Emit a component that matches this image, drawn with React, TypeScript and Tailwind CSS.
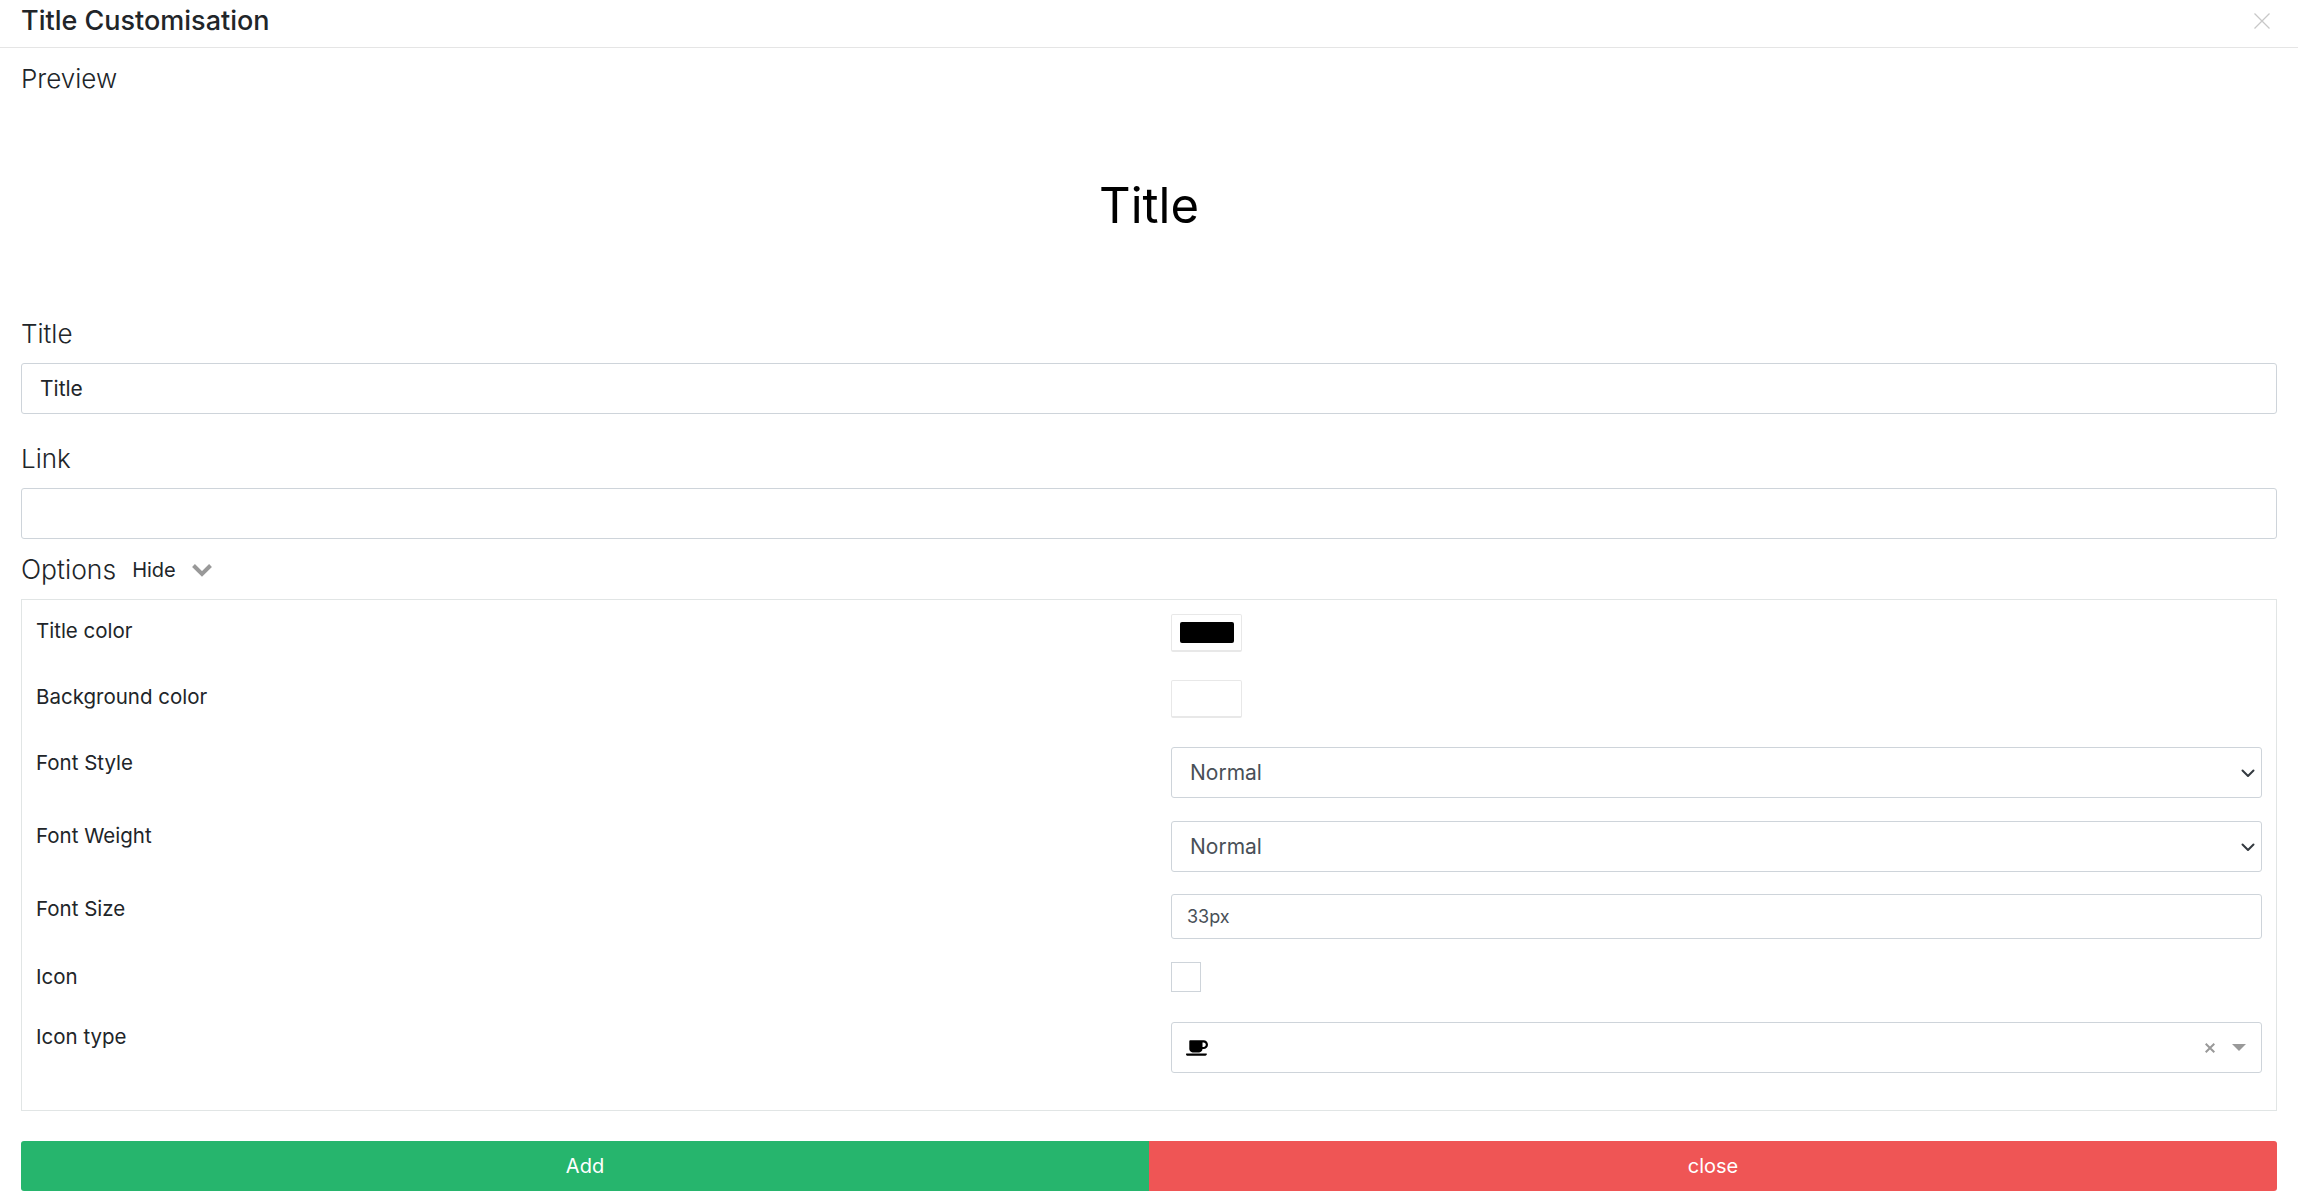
import React from "react";
import { FaCoffee } from "react-icons/fa";

const font = { fontFamily: "Inter, 'Liberation Sans', sans-serif" };

function Row({ label, labelClass = "", className = "", children }: { label: string; labelClass?: string; className?: string; children: React.ReactNode }) {
  return (
    <div className={`flex items-start ${className}`}>
      <div className={`w-[1149px] pl-[14px] shrink-0 text-[20.5px] leading-[30px] text-[#212529] ${labelClass}`}>{label}</div>
      <div className="flex-1 min-w-0">{children}</div>
    </div>
  );
}

function Chevron() {
  return (
    <svg viewBox="0 0 16 16" className="absolute right-[6px] top-1/2 -translate-y-1/2 w-[16px] h-[16px] pointer-events-none" fill="none" stroke="#343a40" strokeWidth="2" strokeLinecap="round" strokeLinejoin="round">
      <path d="M2.5 5.5 8 11l5.5-5.5" />
    </svg>
  );
}

function Sel({ className = "" }: { className?: string }) {
  return (
    <div className={`relative h-[51px] ${className}`}>
      <select className="block w-full h-full appearance-none bg-white border border-[#ced4da] rounded-[3px] pl-[18px] pr-8 text-[21px] text-[#495057] outline-none" defaultValue="Normal">
        <option>Normal</option>
      </select>
      <Chevron />
    </div>
  );
}

export default function App() {
  return (
    <div className="w-[2298px] h-[1196px] bg-white overflow-hidden text-[#212529]" style={font}>
      <header className="h-[48px] border-b border-[#e5e5e5] pb-[6px] pl-[21px] pr-[20px] flex items-center justify-between">
        <h1 className="text-[27px] leading-[40px] font-medium text-[#212529]">Title Customisation</h1>
        <svg viewBox="0 0 16 16" className="w-[16px] h-[16px] mr-[8px]" fill="none" stroke="#c8c8c8" strokeWidth="1.3">
          <path d="M.5.5l15 15M15.5.5l-15 15" />
        </svg>
      </header>

      <main className="px-[21px]">
        <div className="pt-[11px] text-[26px] leading-[39px] font-light text-[#212529]">Preview</div>
        <div className="h-[215px] pb-[0px] flex items-center justify-center">
          <span className="text-[49px] leading-[64px] text-black font-normal">Title</span>
        </div>

        <label className="block mt-[1px] text-[26px] leading-[39px] font-light">Title</label>
        <input readOnly value="Title" className="block w-full h-[51px] mt-[10px] border border-[#ced4da] rounded-[3px] px-[18px] text-[21px] text-[#212529] outline-none" />

        <label className="block mt-[25px] h-[39px] text-[26px] leading-[39px] font-light">Link</label>
        <input readOnly className="block w-full h-[51px] mt-[10px] border border-[#ced4da] rounded-[3px] px-[18px] text-[21px] text-[#495057] outline-none" />

        <div className="mt-[11px] h-[39px] flex items-center">
          <span className="text-[26.5px] leading-[39px] font-light">Options</span>
          <span className="ml-[16px] text-[20px]">Hide</span>
          <svg viewBox="0 0 20 14" className="ml-[16px] w-[20px] h-[14px]" fill="none" stroke="#999999" strokeWidth="4">
            <path d="M1.5 2.5 10 11l8.5-8.5" />
          </svg>
        </div>

        <section className="mt-[10px] h-[512px] border border-[#e1e5e5] pt-[14px] pr-[14px]">
          <Row label="Title color" labelClass="pt-[2px]" className="mb-[28px]">
            <div className="w-[71px] h-[38px] rounded-[2px] border border-[#e8e8e8] border-b-2 flex items-center justify-center">
              <div className="w-[54px] h-[21px] rounded-[2px] bg-black" />
            </div>
          </Row>
          <Row label="Background color" labelClass="pt-[2px]" className="mb-[29px]">
            <div className="w-[71px] h-[38px] rounded-[2px] border border-[#e8e8e8] border-b-2" />
          </Row>
          <Row label="Font Style" labelClass="pt-[1px]" className="mb-[23px]">
            <Sel />
          </Row>
          <Row label="Font Weight" className="mb-[22px]">
            <Sel />
          </Row>
          <Row label="Font Size" className="mb-[23px]">
            <input readOnly value="33px" className="block w-full h-[45px] border border-[#ced4da] rounded-[3px] px-[15px] text-[18px] text-[#495057] outline-none" />
          </Row>
          <Row label="Icon" className="mb-[30px]">
            <div className="w-[30px] h-[30px] border border-[#ced4da]" />
          </Row>
          <Row label="Icon type">
            <div className="relative h-[51px] border border-[#ced4da] rounded-[3px] flex items-center pl-[14px] pr-[15px]">
              <FaCoffee className="text-black w-[22px] h-[18px]" />
              <div className="ml-auto flex items-center gap-[17px]">
                <svg viewBox="0 0 10 10" className="w-[10px] h-[10px]" fill="none" stroke="#999999" strokeWidth="2"><path d="M.7.7l8.6 8.6M9.3.7.7 9.3" /></svg>
                <svg viewBox="0 0 14 7" className="w-[14px] h-[7px]"><path d="M0 0h14L7 7z" fill="#999999" /></svg>
              </div>
            </div>
          </Row>
        </section>

        <div className="mt-[30px] flex h-[50px] text-[20px] text-white">
          <button className="w-1/2 bg-[#26b56d] rounded-l-[3px]">Add</button>
          <button className="w-1/2 bg-[#ef5555] rounded-r-[3px]">close</button>
        </div>
      </main>
    </div>
  );
}
